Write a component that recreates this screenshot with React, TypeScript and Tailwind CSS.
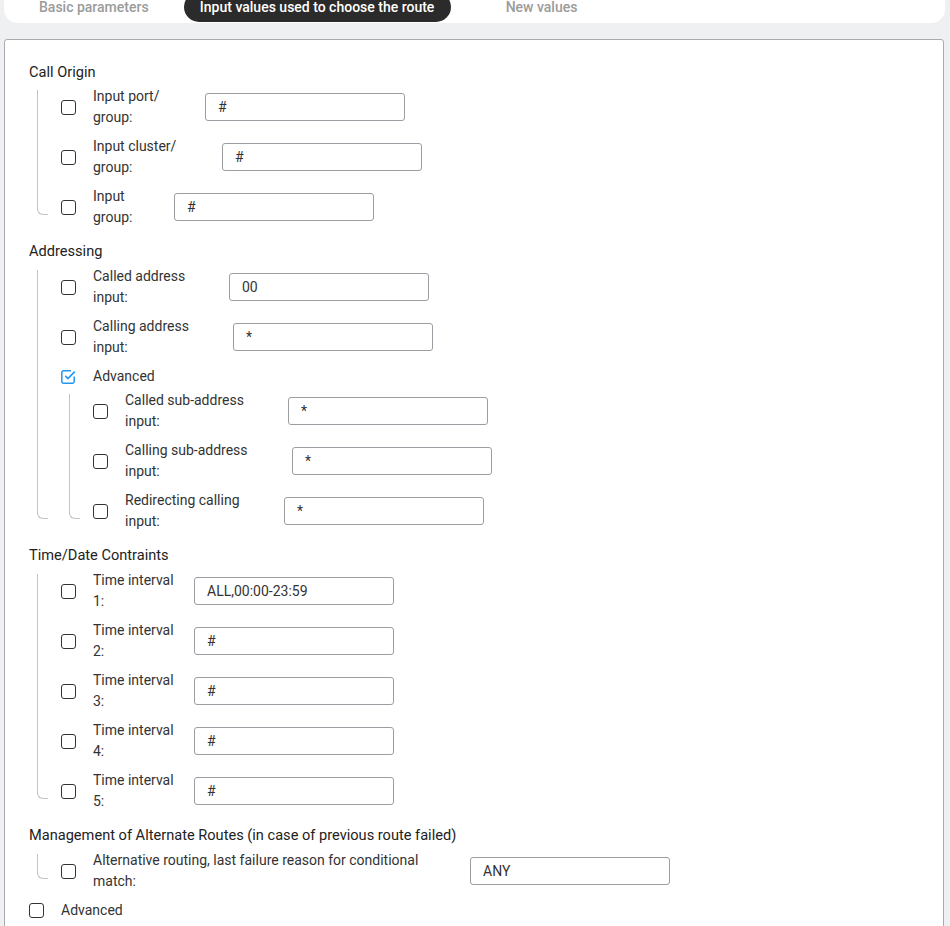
import React from "react";

type Field = {
  lines: [string, string];
  labelWidth: number;
  value: string;
};

const callOrigin: Field[] = [
  { lines: ["Input port/", "group:"], labelWidth: 112, value: "#" },
  { lines: ["Input cluster/", "group:"], labelWidth: 129, value: "#" },
  { lines: ["Input", "group:"], labelWidth: 81, value: "#" },
];

const addressing: Field[] = [
  { lines: ["Called address", "input:"], labelWidth: 136, value: "00" },
  { lines: ["Calling address", "input:"], labelWidth: 140, value: "*" },
];

const subAddressing: Field[] = [
  { lines: ["Called sub-address", "input:"], labelWidth: 163, value: "*" },
  { lines: ["Calling sub-address", "input:"], labelWidth: 167, value: "*" },
  { lines: ["Redirecting calling", "input:"], labelWidth: 159, value: "*" },
];

const timeIntervals: Field[] = [
  { lines: ["Time interval", "1:"], labelWidth: 101, value: "ALL,00:00-23:59" },
  { lines: ["Time interval", "2:"], labelWidth: 101, value: "#" },
  { lines: ["Time interval", "3:"], labelWidth: 101, value: "#" },
  { lines: ["Time interval", "4:"], labelWidth: 101, value: "#" },
  { lines: ["Time interval", "5:"], labelWidth: 101, value: "#" },
];

const alternate: Field[] = [
  {
    lines: ["Alternative routing, last failure reason for conditional", "match:"],
    labelWidth: 377,
    value: "ANY",
  },
];

function Checkbox({ checked = false }: { checked?: boolean }) {
  if (checked) {
    return (
      <svg width="15" height="15" viewBox="0 0 15 15" className="shrink-0" fill="none">
        <path
          d="M13.2 7.6v4.9a1.7 1.7 0 0 1-1.7 1.7H2.5A1.7 1.7 0 0 1 .8 12.5v-9A1.7 1.7 0 0 1 2.5 1.8h7.4"
          stroke="#2196f3"
          strokeWidth="1.5"
        />
        <path d="M4.3 6.9l2.6 2.6 6.9-6.9" stroke="#2196f3" strokeWidth="1.6" />
      </svg>
    );
  }
  return <span className="block h-[15px] w-[15px] shrink-0 rounded-[3px] border-[1.5px] border-[#333]" />;
}

function Row({ field }: { field: Field }) {
  return (
    <div className="flex h-[42px] items-center">
      <Checkbox />
      <label className="ml-[17px] shrink-0 leading-[21px]" style={{ width: field.labelWidth }}>
        {field.lines[0]}
        <br />
        {field.lines[1]}
      </label>
      <input
        defaultValue={field.value}
        className="h-[28px] w-[200px] rounded-[3px] border border-[#9a9da2] bg-white px-[12px] text-[14px] text-[#333] outline-none"
      />
    </div>
  );
}

function Tree({ children, className = "" }: { children: React.ReactNode; className?: string }) {
  return (
    <div className={"flex " + className}>
      <div className="mb-[13px] ml-[8px] mt-[4px] w-[11px] shrink-0 rounded-bl-[6px] border-b border-l border-[#c4c4c4]" />
      <div className="ml-[13px] flex flex-col">{children}</div>
    </div>
  );
}

function Heading({ children, className = "" }: { children: React.ReactNode; className?: string }) {
  return <h3 className={"h-[20px] text-[14.6px] leading-[20px] text-[#222] " + className}>{children}</h3>;
}

export default function App() {
  return (
    <div className="min-h-[926px] overflow-hidden bg-[#eff0f2] font-['Roboto',sans-serif] text-[14px] text-[#333]">
      <div className="-mt-[13px] ml-[4px] mr-[5px] flex h-[36px] items-end rounded-b-[14px] bg-white pb-[1px]">
        <div className="ml-[19px] flex h-[30px] items-center px-4 font-medium text-[#9b9b9b]">Basic parameters</div>
        <div className="ml-[19px] flex h-[30px] w-[267px] items-center justify-center rounded-full bg-[#2b2b2b] font-medium text-white">
          Input values used to choose the route
        </div>
        <div className="ml-[39px] flex h-[30px] items-center px-4 font-medium text-[#9b9b9b]">New values</div>
      </div>

      <div className="ml-[4px] mr-[6px] mt-[16px] rounded-t-[3px] border border-[#a9abae] bg-white pb-[30px] pl-[24px] pt-[22px]">
        <Heading>Call Origin</Heading>
        <Tree className="mt-[4px]">
          <div className="flex flex-col gap-[8px]">
            {callOrigin.map((f) => (
              <Row key={f.lines[0] + f.lines[1]} field={f} />
            ))}
          </div>
        </Tree>

        <Heading className="mt-[13px]">Addressing</Heading>
        <Tree className="mt-[5px]">
          <div className="flex flex-col gap-[8px]">
            {addressing.map((f) => (
              <Row key={f.lines[0]} field={f} />
            ))}
          </div>
          <div className="mt-[8px] flex h-[21px] items-center">
            <Checkbox checked />
            <span className="ml-[17px] leading-[21px]">Advanced</span>
          </div>
          <Tree className="mt-[3px]">
            <div className="flex flex-col gap-[8px]">
              {subAddressing.map((f) => (
                <Row key={f.lines[0]} field={f} />
              ))}
            </div>
          </Tree>
        </Tree>

        <Heading className="mt-[13px]">Time/Date Contraints</Heading>
        <Tree className="mt-[5px]">
          <div className="flex flex-col gap-[8px]">
            {timeIntervals.map((f) => (
              <Row key={f.lines[1]} field={f} />
            ))}
          </div>
        </Tree>

        <Heading className="mt-[13px]">Management of Alternate Routes (in case of previous route failed)</Heading>
        <Tree className="mt-[5px]">
          {alternate.map((f) => (
            <Row key={f.lines[0]} field={f} />
          ))}
        </Tree>

        <div className="mt-[8px] flex h-[21px] items-center">
          <Checkbox />
          <span className="ml-[17px] leading-[21px]">Advanced</span>
        </div>
      </div>
    </div>
  );
}
